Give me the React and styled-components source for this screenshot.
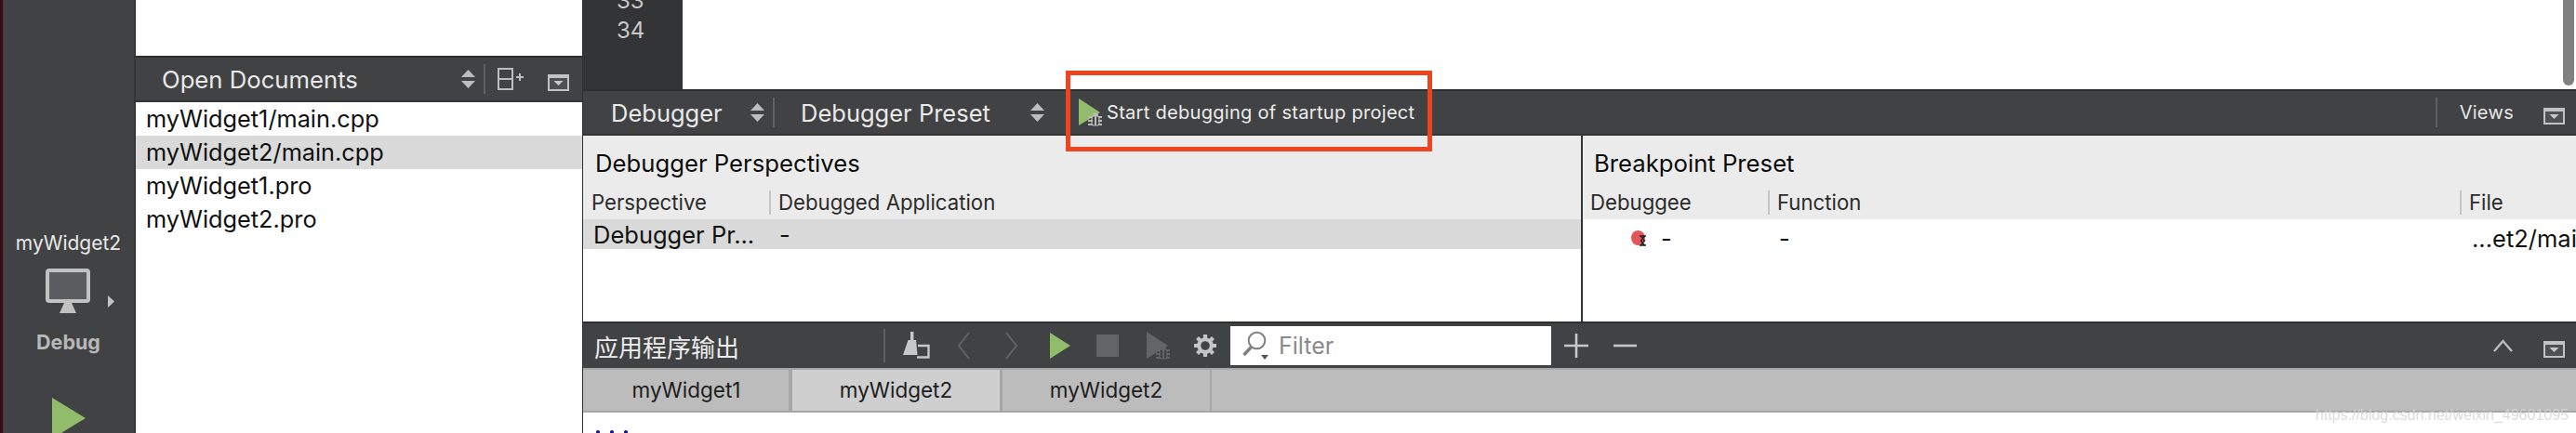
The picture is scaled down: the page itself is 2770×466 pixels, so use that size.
import styled, { createGlobalStyle } from "styled-components";

const GlobalStyle = createGlobalStyle`
    html, body {
        margin: 0;
        padding: 0;
        background: #fff;
    }
    * {
        box-sizing: border-box;
    }
`;

const uiFont = `Inter, "Noto Sans CJK SC", sans-serif`;
const iconGrey = "#c4c4c4";
const dimGrey = "#636465";
const green = "#90bc6c";

const Shell = styled.div`
    position: relative;
    display: flex;
    width: 2770px;
    height: 466px;
    overflow: hidden;
    font-family: ${uiFont};
    background: #fff;
`;

/* left mode bar */
const Sidebar = styled.aside`
    flex: 0 0 146px;
    display: flex;
    flex-direction: column;
    align-items: center;
    background: #414244;
    border-left: 3px solid #3a0a18;
    border-right: 2px solid #343536;
`;

const SideRule = styled.div`
    align-self: stretch;
    height: 2px;
    margin: 236px 0 0 1px;
    background: #5c5d5f;
`;

const KitName = styled.div`
    margin-top: 11px;
    font-size: 21px;
    line-height: 30px;
    color: #e8e8e8;
`;

const KitRow = styled.div`
    position: relative;
    width: 48px;
    margin: 12px 0 0 -1px;
`;

const KitArrow = styled.svg`
    position: absolute;
    left: 67px;
    top: 29px;
`;

const KitMode = styled.div`
    margin-top: 16px;
    font-size: 21.5px;
    font-weight: 700;
    line-height: 30px;
    color: #b8b8b8;
`;

const SideRun = styled.svg`
    display: block;
    margin: 45px 0 0 0;
    flex: none;
`;

/* open documents column */
const DocsColumn = styled.section`
    flex: 0 0 480px;
    display: flex;
    flex-direction: column;
    padding-top: 60px;
    background: #fff;
`;

const Bar = styled.div`
    display: flex;
    flex: none;
    align-items: center;
    height: 50px;
    padding-right: ${(p) => p.$right || 0}px;
    color: #e9e9e9;
    background: #414244;
    border-top: 2px solid #2f3031;
    border-bottom: ${(p) => (p.$flat ? "0" : "2px solid #343536")};
`;

const BarTitle = styled.div`
    flex: ${(p) => (p.$grow ? 1 : "none")};
    margin-left: ${(p) => p.$ml || 0}px;
    font-size: 25.7px;
    white-space: nowrap;
`;

const Tool = styled.svg`
    display: block;
    flex: none;
    margin-left: ${(p) => p.$ml || 0}px;
`;

const BarRule = styled.div`
    flex: none;
    width: 2px;
    height: ${(p) => p.$h || 32}px;
    margin-left: ${(p) => p.$ml || 0}px;
    background: #5f6062;
`;

const DocRow = styled.div`
    height: 36px;
    padding-left: 11px;
    font-size: 25.3px;
    line-height: 36px;
    color: #111;
    background: ${(p) => (p.$selected ? "#dadada" : "#fff")};
`;

/* editor + debugger */
const Main = styled.main`
    flex: 1;
    min-width: 0;
    display: flex;
    flex-direction: column;
    border-left: 1px solid #2f3031;
`;

const Editor = styled.div`
    flex: 0 0 96px;
    display: flex;
    overflow: hidden;
    background: #fff;
`;

const Gutter = styled.div`
    flex: 0 0 107px;
    padding: 0 0 0 36px;
    font-size: 24px;
    line-height: 32px;
    color: #c9c9c9;
    background: #333435;
`;

const GutterLines = styled.div`
    margin-top: -15px;
`;

const EditorScroll = styled.div`
    width: 12px;
    height: 92px;
    margin: 0 2px 0 auto;
    border-radius: 0 0 6px 6px;
    background: #808080;
`;

const Combo = styled.div`
    flex: none;
    display: flex;
    align-items: center;
    justify-content: space-between;
    width: ${(p) => p.$w}px;
    padding: 0 ${(p) => p.$pr}px 0 ${(p) => p.$pl}px;
    font-size: 25.5px;
`;

const StartButton = styled.div`
    flex: none;
    display: flex;
    align-items: center;
    margin-left: 24px;
    font-size: 20px;
    letter-spacing: 0.3px;
    color: #ececec;
`;

const StartLabel = styled.span`
    margin-left: 5px;
    white-space: nowrap;
`;

const BarLabel = styled.div`
    flex: none;
    margin-left: ${(p) => p.$ml || 0}px;
    font-size: 20px;
    letter-spacing: 0.3px;
    color: #e6e6e6;
`;

const BarFill = styled.div`
    flex: 1;
`;

const Panels = styled.div`
    flex: 0 0 200px;
    display: flex;
`;

const Panel = styled.section`
    flex: ${(p) => (p.$w ? `0 0 ${p.$w}px` : 1)};
    min-width: 0;
    overflow: hidden;
    border-right: ${(p) => (p.$w ? "2px solid #343536" : "0")};
`;

const PanelHead = styled.div`
    height: 90px;
    background: #ebebeb;
`;

const PanelTitle = styled.h3`
    height: 59px;
    margin: 0;
    padding-left: ${(p) => p.$pl}px;
    font-size: 25.7px;
    font-weight: 400;
    line-height: 59px;
    color: #0c0c0c;
`;

const ColumnRow = styled.div`
    display: flex;
    height: 26px;
`;

const ColumnCell = styled.div`
    flex: ${(p) => (p.$w ? `0 0 ${p.$w}px` : 1)};
    margin-left: ${(p) => p.$ml || 0}px;
    padding-left: ${(p) => p.$pl}px;
    font-size: 22.2px;
    line-height: 26px;
    color: #2b2b2b;
    border-left: ${(p) => (p.$rule ? "2px solid #c5c5c5" : "0")};
    white-space: nowrap;
`;

const Row = styled.div`
    display: flex;
    align-items: center;
    height: ${(p) => p.$h}px;
    font-size: 25.5px;
    color: #111;
    background: ${(p) => (p.$selected ? "#dadada" : "transparent")};
`;

const RowCell = styled.div`
    flex: ${(p) => (p.$w ? `0 0 ${p.$w}px` : 1)};
    display: flex;
    align-items: center;
    gap: ${(p) => p.$gap || 0}px;
    padding-left: ${(p) => p.$pl}px;
    white-space: nowrap;
`;

const CjkTitle = styled(BarTitle)`
    font-family: "Noto Sans CJK SC", sans-serif;
    font-size: 26px;
    color: #ececec;
`;

const FilterBox = styled.div`
    flex: 0 0 345px;
    display: flex;
    align-items: center;
    height: 42px;
    margin-left: 14px;
    padding-left: 13px;
    background: #fff;
`;

const FilterText = styled.span`
    margin-left: 7px;
    font-size: 25px;
    color: #8a8a8a;
`;

const TabStrip = styled.div`
    flex: 0 0 48px;
    display: flex;
    background: #bcbcbc;
    border-top: 2px solid #a6a6a6;
    border-bottom: 2px solid #a6a6a6;
    padding-left: 1px;
`;

const Tab = styled.div`
    flex: 0 0 ${(p) => p.$w}px;
    margin-right: ${(p) => p.$gap}px;
    font-size: 22.5px;
    line-height: 44px;
    text-align: center;
    color: #1d1d1d;
    background: ${(p) => (p.$active ? "#cfcfcf" : "#bcbcbc")};
    box-shadow: ${(p) => p.$gap}px 0 0 #a6a6a6;
`;

const OutputPane = styled.div`
    flex: 1;
    display: flex;
    align-items: flex-end;
    gap: 11px;
    padding-left: 14px;
    overflow: hidden;
`;

const OutputDot = styled.span`
    width: 4px;
    height: 3px;
    border-radius: 2px 2px 0 0;
    background: #11119a;
`;

/* overlays */
const CalloutBox = styled.div`
    position: absolute;
    left: 1146px;
    top: 76px;
    width: 394px;
    height: 87px;
    border: 5px solid #ee4520;
    pointer-events: none;
`;

const Watermark = styled.div`
    position: absolute;
    right: 8px;
    top: 436px;
    font-family: "Liberation Sans", sans-serif;
    font-size: 16px;
    line-height: 22px;
    color: rgba(214, 214, 214, 0.85);
`;

const Stepper = ({ ml }) => (
    <Tool $ml={ml} width="15" height="22" viewBox="0 0 15 22">
        <path d="M0 9 7.5 1 15 9Z M0 13 7.5 21 15 13Z" fill="#bdbdbd" />
    </Tool>
);

const MenuBox = ({ ml }) => (
    <Tool $ml={ml} width="23" height="26" viewBox="0 0 23 26">
        <rect x="1" y="9" width="21" height="16" fill="#4f5052" stroke="#c2c2c2" strokeWidth="2" />
        <rect x="0" y="8" width="23" height="4" fill="#c2c2c2" />
        <path d="M6.5 15h10l-5 5z" fill="#c8c8c8" />
    </Tool>
);

const SplitAdd = ({ ml }) => (
    <Tool $ml={ml} width="28" height="24" viewBox="0 0 28 24">
        <rect x="1" y="1" width="15" height="22" fill="none" stroke="#bdbdbd" strokeWidth="2" />
        <path d="M1 12h15M20 10h8M24 6v8" stroke="#bdbdbd" strokeWidth="2" fill="none" />
    </Tool>
);

const RunTriangle = ({ ml }) => (
    <Tool $ml={ml} width="22" height="28" viewBox="0 0 22 28">
        <path d="M0 0 22 14 0 28Z" fill={green} />
    </Tool>
);

const StopSquare = ({ ml }) => (
    <Tool $ml={ml} width="24" height="24" viewBox="0 0 24 24">
        <rect width="24" height="24" fill={dimGrey} />
    </Tool>
);

const BugRun = ({ ml, fill, bug }) => (
    <Tool $ml={ml} width="25" height="30" viewBox="0 0 25 30">
        <path d="M0 0 23 15 0 29Z" fill={fill} />
        <ellipse cx="18" cy="17.5" rx="3" ry="2.6" fill={bug} />
        <rect x="14" y="19" width="8" height="10" rx="2.5" fill="#414244" stroke={bug} strokeWidth="1.2" />
        <path
            d="M18 19v10M10 20h5M10 24h5M10 28h5M21 20h4M21 24h4M21 28h4"
            stroke={bug}
            strokeWidth="2"
            fill="none"
        />
    </Tool>
);

const Broom = ({ ml }) => (
    <Tool $ml={ml} width="29" height="30" viewBox="0 0 29 30">
        <rect x="8" y="0" width="3.4" height="10" fill="#c8c8c8" />
        <path d="M5.5 9h8.6l1.4 16H0z" fill="#c8c8c8" />
        <path d="M16 15h11.5v12.5H15" fill="none" stroke="#c8c8c8" strokeWidth="2.4" />
    </Tool>
);

const Gear = ({ ml }) => (
    <Tool $ml={ml} width="26" height="26" viewBox="0 0 26 26">
        <g stroke={iconGrey} fill="none">
            <circle cx="13" cy="13" r="6.8" strokeWidth="4" />
            <path
                d="M13 1v5M13 20v5M1 13h5M20 13h5M4.5 4.5l3.5 3.5M18 18l3.5 3.5M21.5 4.5 18 8M8 18l-3.5 3.5"
                strokeWidth="4.2"
            />
        </g>
    </Tool>
);

const Chevron = ({ ml, dir, color }) => (
    <Tool $ml={ml} width="14" height="32" viewBox="0 0 14 32">
        <path
            d={dir === "left" ? "M13 2 2 16 13 30" : "M1 2 12 16 1 30"}
            fill="none"
            stroke={color}
            strokeWidth="2"
        />
    </Tool>
);

const ChevronUp = ({ ml }) => (
    <Tool $ml={ml} width="21" height="14" viewBox="0 0 21 14">
        <path d="M1 13 10.5 2 20 13" fill="none" stroke="#bdbdbd" strokeWidth="2.4" />
    </Tool>
);

const Magnifier = () => (
    <Tool width="32" height="32" viewBox="0 0 32 32">
        <circle cx="15.5" cy="10.5" r="8.8" fill="none" stroke="#808080" strokeWidth="2" />
        <path d="M9.5 17.5 1.5 26" stroke="#808080" strokeWidth="3.4" />
        <path d="M20 26h8l-4 5z" fill="#555" />
    </Tool>
);

const Monitor = () => (
    <svg width="48" height="48" viewBox="0 0 48 48" style={{ display: "block" }}>
        <rect x="2" y="2" width="44" height="33" rx="2" fill="#5b5c5d" stroke="#c2c2c2" strokeWidth="4" />
        <path d="M20 37h8l5 11H15z" fill="#c2c2c2" />
    </svg>
);

const BreakpointMark = () => (
    <svg width="18" height="24" viewBox="0 0 18 24" style={{ display: "block" }}>
        <ellipse cx="7.5" cy="12" rx="7.5" ry="8" fill="#e2555a" />
        <path d="M9 10h7M9 20h7M10.5 10l4 5-4 5M14.5 10l-4 5 4 5" stroke="#222" strokeWidth="1.4" fill="none" />
    </svg>
);

const docs = ["myWidget1/main.cpp", "myWidget2/main.cpp", "myWidget1.pro", "myWidget2.pro"];

const App = () => (
    <Shell>
        <GlobalStyle />
        <Sidebar>
            <SideRule />
            <KitName>myWidget2</KitName>
            <KitRow>
                <Monitor />
                <KitArrow width="7" height="13" viewBox="0 0 7 13">
                    <path d="M0 0 7 6.5 0 13Z" fill="#c4c4c4" />
                </KitArrow>
            </KitRow>
            <KitMode>Debug</KitMode>
            <SideRun width="36" height="44" viewBox="0 0 36 44">
                <path d="M0 0 36 22 0 44Z" fill={green} />
            </SideRun>
        </Sidebar>

        <DocsColumn>
            <Bar $right={14}>
                <BarTitle $ml={28} $grow>
                    Open Documents
                </BarTitle>
                <Stepper />
                <BarRule $ml={9} />
                <SplitAdd ml={13} />
                <MenuBox ml={26} />
            </Bar>
            {docs.map((name, i) => (
                <DocRow key={name} $selected={i === 1}>
                    {name}
                </DocRow>
            ))}
        </DocsColumn>

        <Main>
            <Editor>
                <Gutter>
                    <GutterLines>
                        <div>33</div>
                        <div>34</div>
                    </GutterLines>
                </Gutter>
                <EditorScroll />
            </Editor>

            <Bar $right={12}>
                <Combo $w={204} $pl={30} $pr={9}>
                    Debugger
                    <Stepper />
                </Combo>
                <BarRule />
                <Combo $w={303} $pl={28} $pr={13}>
                    Debugger Preset
                    <Stepper />
                </Combo>
                <StartButton>
                    <BugRun fill={green} bug="#b8b8b8" />
                    <StartLabel>Start debugging of startup project</StartLabel>
                </StartButton>
                <BarFill />
                <BarRule />
                <BarLabel $ml={24}>Views</BarLabel>
                <MenuBox ml={32} />
            </Bar>

            <Panels>
                <Panel $w={1075}>
                    <PanelHead>
                        <PanelTitle $pl={13}>Debugger Perspectives</PanelTitle>
                        <ColumnRow>
                            <ColumnCell $w={200} $pl={9}>
                                Perspective
                            </ColumnCell>
                            <ColumnCell $rule $pl={8}>
                                Debugged Application
                            </ColumnCell>
                        </ColumnRow>
                    </PanelHead>
                    <Row $h={32} $selected>
                        <RowCell $w={211} $pl={11}>
                            Debugger Pr...
                        </RowCell>
                        <RowCell $pl={0}>-</RowCell>
                    </Row>
                </Panel>
                <Panel>
                    <PanelHead>
                        <PanelTitle $pl={12}>Breakpoint Preset</PanelTitle>
                        <ColumnRow>
                            <ColumnCell $w={203} $ml={-4} $rule $pl={10}>
                                Debuggee
                            </ColumnCell>
                            <ColumnCell $w={744} $rule $pl={8}>
                                Function
                            </ColumnCell>
                            <ColumnCell $rule $pl={8}>
                                File
                            </ColumnCell>
                        </ColumnRow>
                    </PanelHead>
                    <Row $h={40}>
                        <RowCell $w={203} $pl={52} $gap={14}>
                            <BreakpointMark />-
                        </RowCell>
                        <RowCell $w={740} $pl={8}>
                            -
                        </RowCell>
                        <RowCell $pl={13}>...et2/main.cpp</RowCell>
                    </Row>
                </Panel>
            </Panels>

            <Bar $flat $right={12}>
                <CjkTitle $ml={12}>应用程序输出</CjkTitle>
                <BarRule $ml={155} $h={36} />
                <Broom ml={19} />
                <Chevron ml={29} dir="left" color={dimGrey} />
                <Chevron ml={38} dir="right" color={dimGrey} />
                <RunTriangle ml={34} />
                <StopSquare ml={28} />
                <BugRun ml={30} fill={dimGrey} bug={dimGrey} />
                <Gear ml={25} />
                <FilterBox>
                    <Magnifier />
                    <FilterText>Filter</FilterText>
                </FilterBox>
                <Tool $ml={14} width="26" height="26" viewBox="0 0 26 26">
                    <path d="M0 13h26M13 0v26" stroke="#c8c8c8" strokeWidth="2.6" />
                </Tool>
                <Tool $ml={27} width="25" height="4" viewBox="0 0 25 4">
                    <path d="M0 2h25" stroke="#c8c8c8" strokeWidth="2.6" />
                </Tool>
                <BarFill />
                <ChevronUp />
                <MenuBox ml={33} />
            </Bar>

            <TabStrip>
                <Tab $w={220} $gap={4}>
                    myWidget1
                </Tab>
                <Tab $w={223} $gap={3} $active>
                    myWidget2
                </Tab>
                <Tab $w={223} $gap={2}>
                    myWidget2
                </Tab>
            </TabStrip>

            <OutputPane>
                <OutputDot />
                <OutputDot />
                <OutputDot />
            </OutputPane>
        </Main>

        <CalloutBox />
        <Watermark>https://blog.csdn.net/weixin_49601095</Watermark>
    </Shell>
);

export default App;
